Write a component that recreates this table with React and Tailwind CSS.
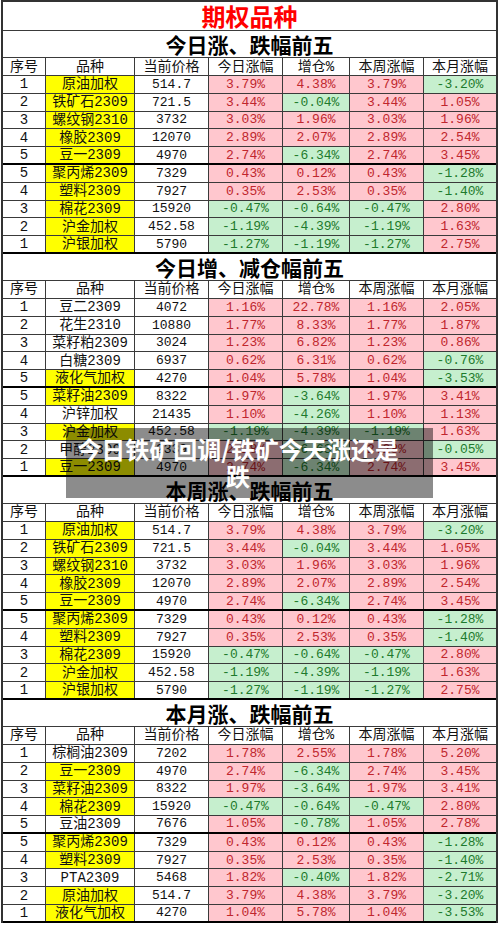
import React from "react";

const COLS = "grid grid-cols-[43px_89px_74px_74px_67px_74px_72px]";
const FONT = { fontFamily: '"Liberation Mono", "Noto Sans CJK SC", monospace' };

const S1 = [
  ["1", "原油加权", 1, "514.7", "3.79%", "4.38%", "3.79%", "-3.20%"],
  ["2", "铁矿石2309", 1, "721.5", "3.44%", "-0.04%", "3.44%", "1.05%"],
  ["3", "螺纹钢2310", 1, "3732", "3.03%", "1.96%", "3.03%", "1.96%"],
  ["4", "橡胶2309", 1, "12070", "2.89%", "2.07%", "2.89%", "2.54%"],
  ["5", "豆一2309", 1, "4970", "2.74%", "-6.34%", "2.74%", "3.45%"],
  ["5", "聚丙烯2309", 1, "7329", "0.43%", "0.12%", "0.43%", "-1.28%"],
  ["4", "塑料2309", 1, "7927", "0.35%", "2.53%", "0.35%", "-1.40%"],
  ["3", "棉花2309", 1, "15920", "-0.47%", "-0.64%", "-0.47%", "2.80%"],
  ["2", "沪金加权", 1, "452.58", "-1.19%", "-4.39%", "-1.19%", "1.63%"],
  ["1", "沪银加权", 1, "5790", "-1.27%", "-1.19%", "-1.27%", "2.75%"],
];

const S2 = [
  ["1", "豆二2309", 0, "4072", "1.16%", "22.78%", "1.16%", "2.05%"],
  ["2", "花生2310", 0, "10880", "1.77%", "8.33%", "1.77%", "1.87%"],
  ["3", "菜籽粕2309", 0, "3024", "1.23%", "6.82%", "1.23%", "0.86%"],
  ["4", "白糖2309", 0, "6937", "0.62%", "6.31%", "0.62%", "-0.76%"],
  ["5", "液化气加权", 1, "4270", "1.04%", "5.78%", "1.04%", "-3.53%"],
  ["5", "菜籽油2309", 1, "8322", "1.97%", "-3.64%", "1.97%", "3.41%"],
  ["4", "沪锌加权", 0, "21435", "1.10%", "-4.26%", "1.10%", "1.13%"],
  ["3", "沪金加权", 1, "452.58", "-1.19%", "-4.39%", "-1.19%", "1.63%"],
  ["2", "甲醇2309", 0, "2339", "2.28%", "-6.63%", "2.28%", "-0.05%"],
  ["1", "豆一2309", 1, "4970", "2.74%", "-6.34%", "2.74%", "3.45%"],
];

const S4 = [
  ["1", "棕榈油2309", 0, "7202", "1.78%", "2.55%", "1.78%", "5.20%"],
  ["2", "豆一2309", 1, "4970", "2.74%", "-6.34%", "2.74%", "3.45%"],
  ["3", "菜籽油2309", 1, "8322", "1.97%", "-3.64%", "1.97%", "3.41%"],
  ["4", "棉花2309", 1, "15920", "-0.47%", "-0.64%", "-0.47%", "2.80%"],
  ["5", "豆油2309", 0, "7676", "1.05%", "-0.78%", "1.05%", "2.78%"],
  ["5", "聚丙烯2309", 1, "7329", "0.43%", "0.12%", "0.43%", "-1.28%"],
  ["4", "塑料2309", 1, "7927", "0.35%", "2.53%", "0.35%", "-1.40%"],
  ["3", "PTA2309", 0, "5468", "1.82%", "-0.40%", "1.82%", "-2.71%"],
  ["2", "原油加权", 1, "514.7", "3.79%", "4.38%", "3.79%", "-3.20%"],
  ["1", "液化气加权", 1, "4270", "1.04%", "5.78%", "1.04%", "-3.53%"],
];

const HEAD = ["序号", "品种", "当前价格", "今日涨幅", "增仓%", "本周涨幅", "本月涨幅"];

function Cell({ children, className = "" }) {
  return (
    <div
      className={`flex items-center justify-center overflow-hidden whitespace-nowrap leading-none border-r border-[#3a3a3a] last:border-r-0 ${className}`}
    >
      {children}
    </div>
  );
}

function DataRow({ r, thick }) {
  const [seq, name, yellow, price, ...vals] = r;
  return (
    <div
      className={`${COLS} h-[17.8px] ${
        thick ? "border-b-2 border-black" : "border-b border-[#3a3a3a]"
      }`}
    >
      <Cell className="text-[14px] text-[#111]">{seq}</Cell>
      <Cell className={`text-[14px] text-[#111] ${yellow ? "bg-[#ffff00]" : "bg-white"}`}>{name}</Cell>
      <Cell className="text-[13px] text-[#111]">{price}</Cell>
      {vals.map((v, i) => {
        const neg = v.startsWith("-");
        return (
          <Cell
            key={i}
            className={`text-[13px] ${
              neg ? "bg-[#c6efce] text-[#1d7a2c]" : "bg-[#ffc7ce] text-[#c0262d]"
            }`}
          >
            {v}
          </Cell>
        );
      })}
    </div>
  );
}

function Section({ title, rows }) {
  return (
    <div>
      <div className="h-[27px] border-b border-[#3a3a3a] flex items-center justify-center bg-white">
        <span
          className="text-[21px] font-bold text-black leading-[26px]"
          style={{ fontFamily: '"Noto Sans CJK SC", sans-serif' }}
        >
          {title}
        </span>
      </div>
      <div className={`${COLS} h-[18px] border-b border-[#3a3a3a]`}>
        {HEAD.map((h) => (
          <Cell key={h} className="text-[14px] text-[#111]">
            {h}
          </Cell>
        ))}
      </div>
      {rows.map((r, i) => (
        <DataRow key={i} r={r} thick={i === 4 || i === 9} />
      ))}
    </div>
  );
}

export default function App() {
  return (
    <div className="relative w-[500px] h-[927px] bg-white overflow-hidden" style={FONT}>
      <div className="ml-[1px] w-[497px] border-t-2 border-l-2 border-r-2 border-[#333] bg-white">
        <div className="h-[29px] border-b border-[#3a3a3a] flex items-center justify-center">
          <span
            className="text-[24px] font-bold text-[#ff0000] leading-[28px]"
            style={{ fontFamily: '"Noto Sans CJK SC", sans-serif' }}
          >
            期权品种
          </span>
        </div>
        <Section title="今日涨、跌幅前五" rows={S1} />
        <Section title="今日增、减仓幅前五" rows={S2} />
        <Section title="本周涨、跌幅前五" rows={S1} />
        <Section title="本月涨、跌幅前五" rows={S4} />
      </div>

      <div className="absolute left-[66px] top-[428px] w-[367px] h-[70px] bg-black/45 pl-[5px] pr-[28px] pt-[7px]">
        <p
          className="text-center text-white font-bold text-[24px] leading-[27px]"
          style={{ fontFamily: '"Noto Sans CJK SC", sans-serif' }}
        >
          今日铁矿回调/铁矿今天涨还是跌
        </p>
      </div>
    </div>
  );
}
